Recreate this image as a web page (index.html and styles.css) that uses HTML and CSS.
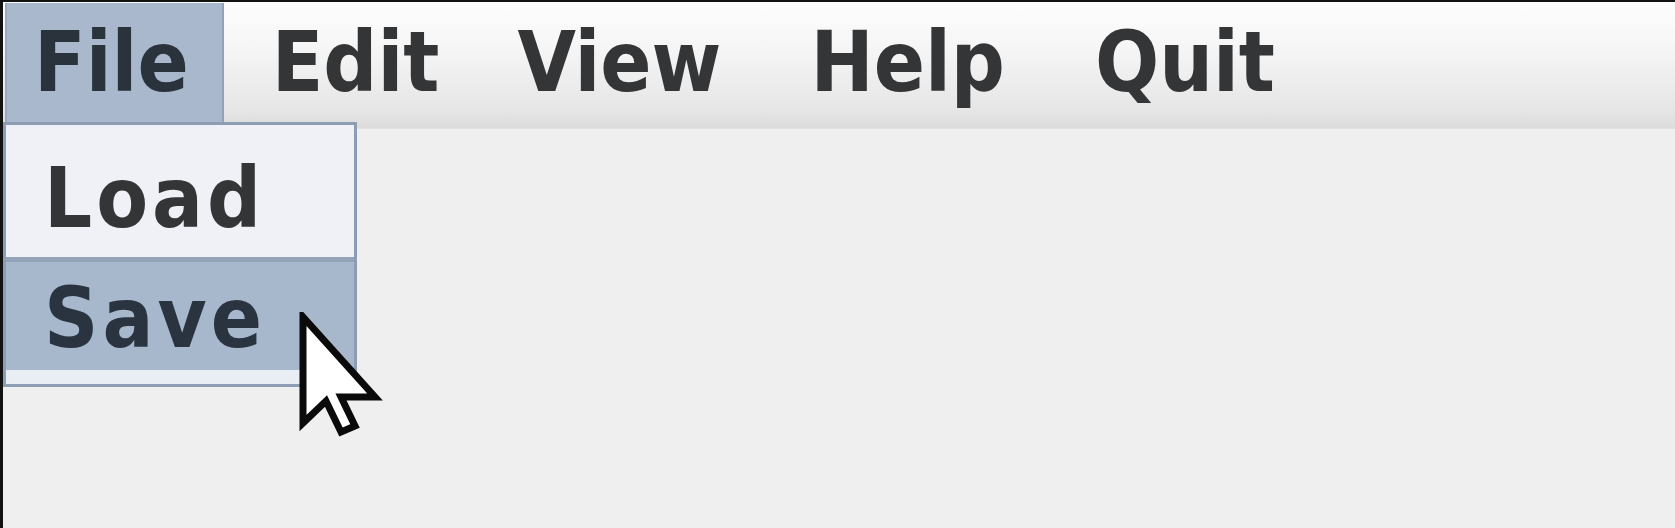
FILE: index.html
```html
<!DOCTYPE html>
<html>
<head>
<meta charset="utf-8">
<link rel="stylesheet" href="styles.css">
</head>
<body>
<div class="screen">
  <div class="menubar">
    <div class="menu menu-active">File</div>
    <div class="menu menu-edit">Edit</div>
    <div class="menu menu-view">View</div>
    <div class="menu menu-help">Help</div>
    <div class="menu menu-quit">Quit</div>
  </div>
  <div class="popup">
    <div class="item item-load">Load</div>
    <div class="item item-save">Save</div>
    <div class="popup-foot"></div>
  </div>
  <svg class="cursor" width="90" height="130" viewBox="0 0 90 130">
    <path d="M4 5 L4 111 L27 89 L42 120 L56 114 L42 85 L76 85 Z" fill="#ffffff" stroke="#0a0a0a" stroke-width="7" stroke-linejoin="miter"/>
  </svg>
</div>
</body>
</html>
```
FILE: styles.css
```css
html, body {
  margin: 0;
  padding: 0;
  background: #121212;
  overflow: hidden;
}
.screen {
  position: relative;
  margin: 2px 0 0 3px;
  height: 526px;
  background: #efefef;
  font-family: "DejaVu Sans Condensed", "DejaVu Sans", sans-serif;
  font-stretch: condensed;
  font-weight: bold;
  font-size: 84px;
  color: #343537;
}
.menubar {
  height: 125px;
  padding: 1px 0 0 2px;
  display: flex;
  gap: 18px;
  background: linear-gradient(#fdfdfd 0%, #f6f6f6 35%, #e6e6e6 85%, #dcdcdc 100%);
  border-bottom: 1px solid #e2e2e2;
}
.menu {
  height: 119px;
  line-height: 119px;
  padding: 0 35px 0 29px;
  white-space: nowrap;
}
.menu-edit { margin-left: 1px; }
.menu-view { margin-left: -4px; }
.menu-help { margin-left: 7px; }
.menu-quit { margin-left: 8px; }
.menu-active {
  background: #a9b8cc;
  box-shadow: inset -2px 0 0 #92a2b9, inset 2px 0 0 #9aa9bd;
  color: #2a323c;
}
.popup {
  position: absolute;
  left: 0;
  top: 120px;
  width: 348px;
  border: 3px solid #8d9db4;
  background: #eef1f7;
}
.item {
  padding-left: 38px;
  letter-spacing: 4px;
  white-space: nowrap;
}
.item-load {
  height: 118px;
  line-height: 118px;
  padding-top: 14px;
  background: #eff1f7;
}
.item-save {
  height: 104px;
  line-height: 104px;
  padding-top: 4px;
  background: #a7b7cc;
  border-top: 5px solid #93a3ba;
  color: #2a3441;
}
.popup-foot {
  height: 14px;
  background: #e9edf4;
}
.cursor {
  position: absolute;
  left: 296px;
  top: 310px;
}
```
